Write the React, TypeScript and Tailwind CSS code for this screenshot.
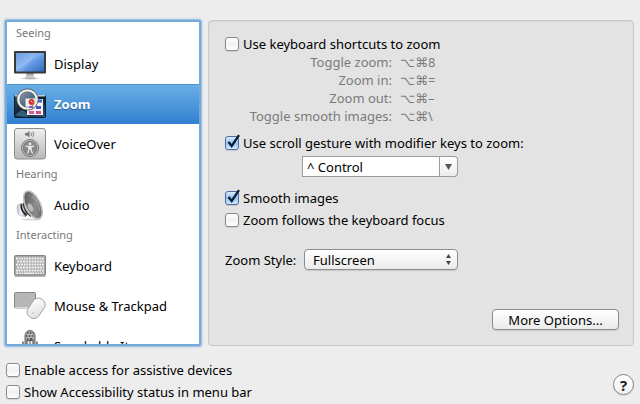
import { useState, type ReactNode } from "react";

function DisplayIcon() {
  return (
    <svg width="32" height="32" viewBox="0 0 32 32" aria-hidden="true">
      <defs>
        <linearGradient id="screen" x1="0" y1="0" x2="1" y2="1">
          <stop offset="0" stopColor="#5c92e0" />
          <stop offset="0.45" stopColor="#86b2ee" />
          <stop offset="0.5" stopColor="#6ba2ea" />
          <stop offset="1" stopColor="#2f68b8" />
        </linearGradient>
        <linearGradient id="stand" x1="0" y1="0" x2="0" y2="1">
          <stop offset="0" stopColor="#8d8d8d" />
          <stop offset="1" stopColor="#e4e4e4" />
        </linearGradient>
      </defs>
      <ellipse cx="16" cy="30.500" rx="9" ry="1.200" fill="#d5d5d5" />
      <path d="M12.500 25h7l.6 4.500h-8.200z" fill="url(#stand)" />
      <path d="M11 29.500h10v1h-10z" fill="#9c9c9c" />
      <rect x="0" y="3" width="32" height="22.500" rx="1" fill="#3a3a3a" />
      <rect x="2" y="5" width="28" height="18.500" fill="url(#screen)" />
      <path d="M2 5h20L9 23.500H2z" fill="#fff" opacity="0.1" />
    </svg>
  );
}

function ZoomIcon() {
  return (
    <svg width="32" height="32" viewBox="0 0 32 32" aria-hidden="true">
      <defs>
        <linearGradient id="desk" x1="0" y1="0" x2="1" y2="1">
          <stop offset="0" stopColor="#31506c" />
          <stop offset="0.5" stopColor="#0d1d2c" />
          <stop offset="1" stopColor="#315a7c" />
        </linearGradient>
        <linearGradient id="lens" x1="0" y1="0" x2="1" y2="1">
          <stop offset="0" stopColor="#8fa4b8" />
          <stop offset="0.6" stopColor="#4d667d" />
          <stop offset="1" stopColor="#dfe6ee" />
        </linearGradient>
      </defs>
      <rect x="0.5" y="7.500" width="31" height="22" rx="1" fill="url(#desk)" stroke="#0b1a29" />
      <rect x="1" y="7" width="30" height="1.500" fill="#bccbd8" />
      <path d="M1 28C8 18 12 23 14 29z" fill="#3f7896" opacity="0.7" />
      <rect x="13" y="11" width="16" height="16" fill="#f3f3f8" />
      <rect x="24" y="11.500" width="4" height="3" fill="#3c69b5" />
      <rect x="15" y="23" width="5" height="3" fill="#d65c99" />
      <rect x="22" y="18" width="5" height="3" fill="#4a54ce" />
      <rect x="22" y="23" width="5" height="3" fill="#d94f8b" />
      <circle cx="13.500" cy="11.500" r="9.200" fill="url(#lens)" stroke="#555" strokeWidth="3.400" />
      <path d="M11.500 10.500h10v3c-1.500 4-5.500 6-10 5z" fill="#edf0f5" />
      <circle cx="13.500" cy="11.500" r="9.200" fill="none" stroke="#eee" strokeWidth="2.300" />
      <circle cx="17.500" cy="14" r="2.900" fill="#d9362a" />
      <path d="M17 13l1.500 1.500" stroke="#fff" strokeWidth="0.800" />
      <rect x="15" y="18" width="4" height="2" fill="#8a51c4" />
    </svg>
  );
}

function VoiceOverIcon() {
  return (
    <svg width="32" height="32" viewBox="0 0 32 32" aria-hidden="true">
      <defs>
        <linearGradient id="plate" x1="0" y1="0" x2="0" y2="1">
          <stop offset="0" stopColor="#efefef" />
          <stop offset="1" stopColor="#b8b8b8" />
        </linearGradient>
      </defs>
      <rect x="0.500" y="0.500" width="31" height="30.500" rx="2.500" fill="url(#plate)" stroke="#8c8c8c" />
      <path d="M11 5h2l2.500-2v6.500L13 7.500h-2z" fill="#777" />
      <path d="M17 4.500q1.200 1.700 0 3.500M18.800 3.600q2 2.500 0 5.200" fill="none" stroke="#777" strokeWidth="0.900" />
      <circle cx="16" cy="20" r="8.500" fill="#d6d6d6" stroke="#707070" strokeWidth="1" />
      <circle cx="16" cy="20" r="6.900" fill="#8a8a8a" stroke="#6b6b6b" strokeWidth="0.800" />
      <circle cx="16" cy="16" r="1.400" fill="#eee" />
      <path d="M11.500 18l3.500.7h2l3.500-.7M16 18.500v3M14.900 19v3l-1.400 3.500M17.100 19v3l1.400 3.500" fill="none" stroke="#eee" strokeWidth="1.200" />
    </svg>
  );
}

function AudioIcon() {
  return (
    <svg width="32" height="32" viewBox="0 0 32 32" aria-hidden="true">
      <defs>
        <linearGradient id="cone" x1="0" y1="0" x2="1" y2="1">
          <stop offset="0" stopColor="#4c4c4c" />
          <stop offset="0.600" stopColor="#8c8c8c" />
          <stop offset="1" stopColor="#505050" />
        </linearGradient>
        <linearGradient id="magnet" x1="0" y1="0" x2="1" y2="0">
          <stop offset="0" stopColor="#b9b9cb" />
          <stop offset="0.400" stopColor="#f7f7fb" />
          <stop offset="1" stopColor="#777" />
        </linearGradient>
      </defs>
      <ellipse cx="17" cy="30.500" rx="10" ry="1" fill="#d8d8d8" />
      <path d="M3.500 16l4-2 6 11-2 3-6.500-2c-2-2-2.500-7-1.500-10z" fill="url(#magnet)" stroke="#aaa" strokeWidth="0.500" />
      <path d="M7.500 15c-1 4 1 8 5 11.500" fill="none" stroke="#222" strokeWidth="1.800" />
      <path d="M11 4L9 13l5 12 10 5z" fill="#d5d5d5" />
      <path d="M9.500 14c0 5 3 10 7.500 13.500" fill="none" stroke="#333" strokeWidth="1.400" />
      <ellipse cx="19" cy="16" rx="7.300" ry="15" transform="rotate(-26 19 16)" fill="url(#cone)" stroke="#c0c0c0" strokeWidth="1.500" />
      <ellipse cx="16.500" cy="18.500" rx="2.300" ry="4.500" transform="rotate(-26 16.500 18.500)" fill="#bbb" />
      <path d="M18 7c4 3.500 7 9 7.500 15" fill="none" stroke="#b8b8b8" strokeWidth="1.500" opacity="0.500" />
    </svg>
  );
}

function KeyboardIcon() {
  const keys = [7.5, 10.5, 13.5, 16.5, 19.5];
  return (
    <svg width="32" height="32" viewBox="0 0 32 32" aria-hidden="true">
      <rect x="0.500" y="6" width="31" height="21" rx="1" fill="#b5b5b5" />
      <rect x="0.500" y="5.500" width="31" height="19.500" rx="1" fill="#a5a5a5" stroke="#858585" />
      {keys.map((y, i) => (
        <path
          key={y}
          d={`M${i % 2 ? 3 : 2} ${y + 1}H30`}
          stroke="#f4f4f4"
          strokeWidth="2"
          strokeDasharray={i % 2 ? "2.2 0.7" : "1.9 0.7"}
        />
      ))}
      <path d="M2 23.200h28" stroke="#f4f4f4" strokeWidth="1.600" strokeDasharray="2 0.700 2 0.700 2 0.700 10 0.700 2 0.700" />
    </svg>
  );
}

function MouseIcon() {
  return (
    <svg width="32" height="32" viewBox="0 0 32 32" aria-hidden="true">
      <defs>
        <linearGradient id="mouse" x1="0" y1="0" x2="1" y2="1">
          <stop offset="0" stopColor="#fff" />
          <stop offset="1" stopColor="#dcdcdc" />
        </linearGradient>
      </defs>
      <rect x="0.500" y="2.500" width="21" height="15.500" rx="1" fill="#b7b7b7" stroke="#858585" />
      <rect x="1" y="17" width="20" height="1.500" fill="#d9d9d9" />
      <rect x="15.500" y="7.500" width="13" height="21.500" rx="6" transform="rotate(34 22 18.500)" fill="url(#mouse)" stroke="#a3a3a3" strokeWidth="0.900" />
      <circle cx="19" cy="23" r="0.900" fill="#c4c4c4" />
    </svg>
  );
}

function MicrophoneIcon() {
  return (
    <svg width="32" height="32" viewBox="0 0 32 32" aria-hidden="true">
      <rect x="11" y="0.500" width="10" height="19" rx="5" fill="#989898" stroke="#707070" />
      <path d="M13 3h1M16 3h1M19 4h1M12 6h1M15 6h1M18 6h1M13 9h1M16 9h2" stroke="#444" strokeWidth="1.500" />
      <path d="M12 4.500h8M12 7.500h8" stroke="#ccc" strokeWidth="0.700" />
      <path d="M9 11.500v10M23 11.500v10" stroke="#888" strokeWidth="2" />
      <path d="M13 10.500h6v9h-6z" fill="#eee" stroke="#555" />
      <path d="M16 10v16" stroke="#555" />
    </svg>
  );
}

const sections: { title: string; items: { name: string; icon: ReactNode }[] }[] = [
  {
    title: "Seeing",
    items: [
      { name: "Display", icon: <DisplayIcon /> },
      { name: "Zoom", icon: <ZoomIcon /> },
      { name: "VoiceOver", icon: <VoiceOverIcon /> },
    ],
  },
  { title: "Hearing", items: [{ name: "Audio", icon: <AudioIcon /> }] },
  {
    title: "Interacting",
    items: [
      { name: "Keyboard", icon: <KeyboardIcon /> },
      { name: "Mouse & Trackpad", icon: <MouseIcon /> },
      { name: "Speakable Items", icon: <MicrophoneIcon /> },
    ],
  },
];

const shortcuts = [
  ["Toggle zoom:", "⌥⌘8"],
  ["Zoom in:", "⌥⌘="],
  ["Zoom out:", "⌥⌘–"],
  ["Toggle smooth images:", "⌥⌘\\"],
];

function Checkbox({ label, defaultChecked = false }: { label: string; defaultChecked?: boolean }) {
  return (
    <label className="flex h-[22px] items-center gap-1 whitespace-nowrap">
      <span className="relative flex size-[14px] shrink-0">
        <input
          type="checkbox"
          defaultChecked={defaultChecked}
          className="peer size-[14px] appearance-none rounded-[3px] border border-[#8b8b8b] bg-linear-to-b from-white via-[#f1f1f1] to-white shadow-[0_1px_1px_#0000001f] checked:border-[#5868a0] checked:from-[#d9ecfc] checked:via-[#8fc4f2] checked:to-[#c7f0ff]"
        />
        <svg
          viewBox="0 0 16 16"
          className="pointer-events-none absolute -top-0.5 left-0 hidden size-4 peer-checked:block"
          aria-hidden="true"
        >
          <path d="M3.500 8l3.200 4L14 1.200" fill="none" stroke="#0c1c33" strokeWidth="2.300" />
        </svg>
      </span>
      {label}
    </label>
  );
}

export default function App() {
  const [selected, setSelected] = useState("Zoom");
  return (
    <div className="min-h-screen bg-[#ededed] pt-5 pr-[6px] pl-[5px] font-['Noto_Sans','DejaVu_Sans',sans-serif] text-[13px] leading-[18px] text-black">
      <main className="flex items-start gap-[7px]">
        <nav
          aria-label="Accessibility features"
          className="h-[326px] w-[196px] shrink-0 overflow-hidden rounded-[2px] border-2 border-[#74a9d9] bg-white shadow-[0_0_2px_1px_#8bb9e2]"
        >
          {sections.map((section) => (
            <section key={section.title} className="first:pt-px">
              <h2 className="h-[21px] pl-[9px] text-[11px] leading-[19px] text-[#777]">{section.title}</h2>
              {section.items.map((item) => (
                <button
                  key={item.name}
                  type="button"
                  aria-current={selected === item.name}
                  onClick={() => setSelected(item.name)}
                  className="flex h-10 w-full items-center gap-2 pl-[7px] text-left whitespace-nowrap aria-[current=true]:bg-linear-to-b aria-[current=true]:from-[#6bb0e6] aria-[current=true]:to-[#2f80d0] aria-[current=true]:font-bold aria-[current=true]:text-white aria-[current=true]:shadow-[inset_0_1px_#4c92d0] aria-[current=true]:text-shadow-[0_1px_1px_#00000066]"
                >
                  {item.icon}
                  {item.name}
                </button>
              ))}
            </section>
          ))}
        </nav>

        <section
          aria-label="Zoom settings"
          className="flex h-[326px] min-w-0 flex-1 flex-col rounded-[4px] border border-[#c8c8c8] bg-[#e3e3e3] pt-3 pr-[14px] pl-4 shadow-[inset_0_1px_2px_#0000000f]"
        >
          <Checkbox label="Use keyboard shortcuts to zoom" />
          <dl className="-mt-[2px] mb-[7px] grid grid-cols-[167px_auto] gap-x-2 text-[#7b7b7b]">
            {shortcuts.map(([name, keys]) => (
              <div key={name} className="contents">
                <dt className="text-right whitespace-nowrap">{name}</dt>
                <dd>{keys}</dd>
              </div>
            ))}
          </dl>
          <Checkbox label="Use scroll gesture with modifier keys to zoom:" defaultChecked />
          <div className="mt-[2px] ml-[77px] flex h-[21px] w-[156px]">
            <input
              aria-label="Modifier key"
              defaultValue="^ Control"
              className="min-w-0 flex-1 border border-[#9b9b9b] bg-white pl-1 outline-none"
            />
            <button
              type="button"
              aria-label="Show modifier keys"
              className="flex w-[18px] items-center justify-center rounded-r-[4px] border border-l-0 border-[#9b9b9b] bg-linear-to-b from-white to-[#ececec]"
            >
              <svg width="7" height="6" viewBox="0 0 7 6" aria-hidden="true">
                <path d="M0 0h7L3.500 6z" fill="#555" />
              </svg>
            </button>
          </div>
          <div className="mt-[10px]">
            <Checkbox label="Smooth images" defaultChecked />
            <Checkbox label="Zoom follows the keyboard focus" />
          </div>
          <div className="mt-[18px] flex items-center">
            <label htmlFor="zoom-style" className="w-[79px] whitespace-nowrap">
              Zoom Style:
            </label>
            <div className="relative">
              <select
                id="zoom-style"
                className="block h-[21px] w-[154px] appearance-none rounded-[4px] border border-[#8e8e8e] bg-linear-to-b from-white to-[#ebebeb] pl-2 shadow-[0_1px_1px_#0000001f]"
              >
                <option>Fullscreen</option>
                <option>Picture-in-picture</option>
              </select>
              <svg
                width="5"
                height="11"
                viewBox="0 0 5 11"
                className="pointer-events-none absolute top-[5px] right-[7px]"
                aria-hidden="true"
              >
                <path d="M0 4h5L2.500 0zM0 7h5L2.500 11z" fill="#444" />
              </svg>
            </div>
          </div>
          <button
            type="button"
            className="mt-auto mb-[15px] h-[21px] w-[127px] self-end rounded-[4px] border border-[#8e8e8e] bg-linear-to-b from-white to-[#ebebeb] leading-[18px] shadow-[0_1px_1px_#0000001f]"
          >
            More Options...
          </button>
        </section>
      </main>

      <footer className="flex items-end justify-between pt-[13px] pl-px">
        <div>
          <Checkbox label="Enable access for assistive devices" />
          <Checkbox label="Show Accessibility status in menu bar" />
        </div>
        <button
          type="button"
          aria-label="Help"
          className="mb-2 flex size-[21px] items-center justify-center rounded-full border border-[#858585] bg-linear-to-b from-white to-[#f1f1f1] text-[15px] font-bold text-[#222] shadow-[0_1px_1px_#0000001f]"
        >
          ?
        </button>
      </footer>
    </div>
  );
}
